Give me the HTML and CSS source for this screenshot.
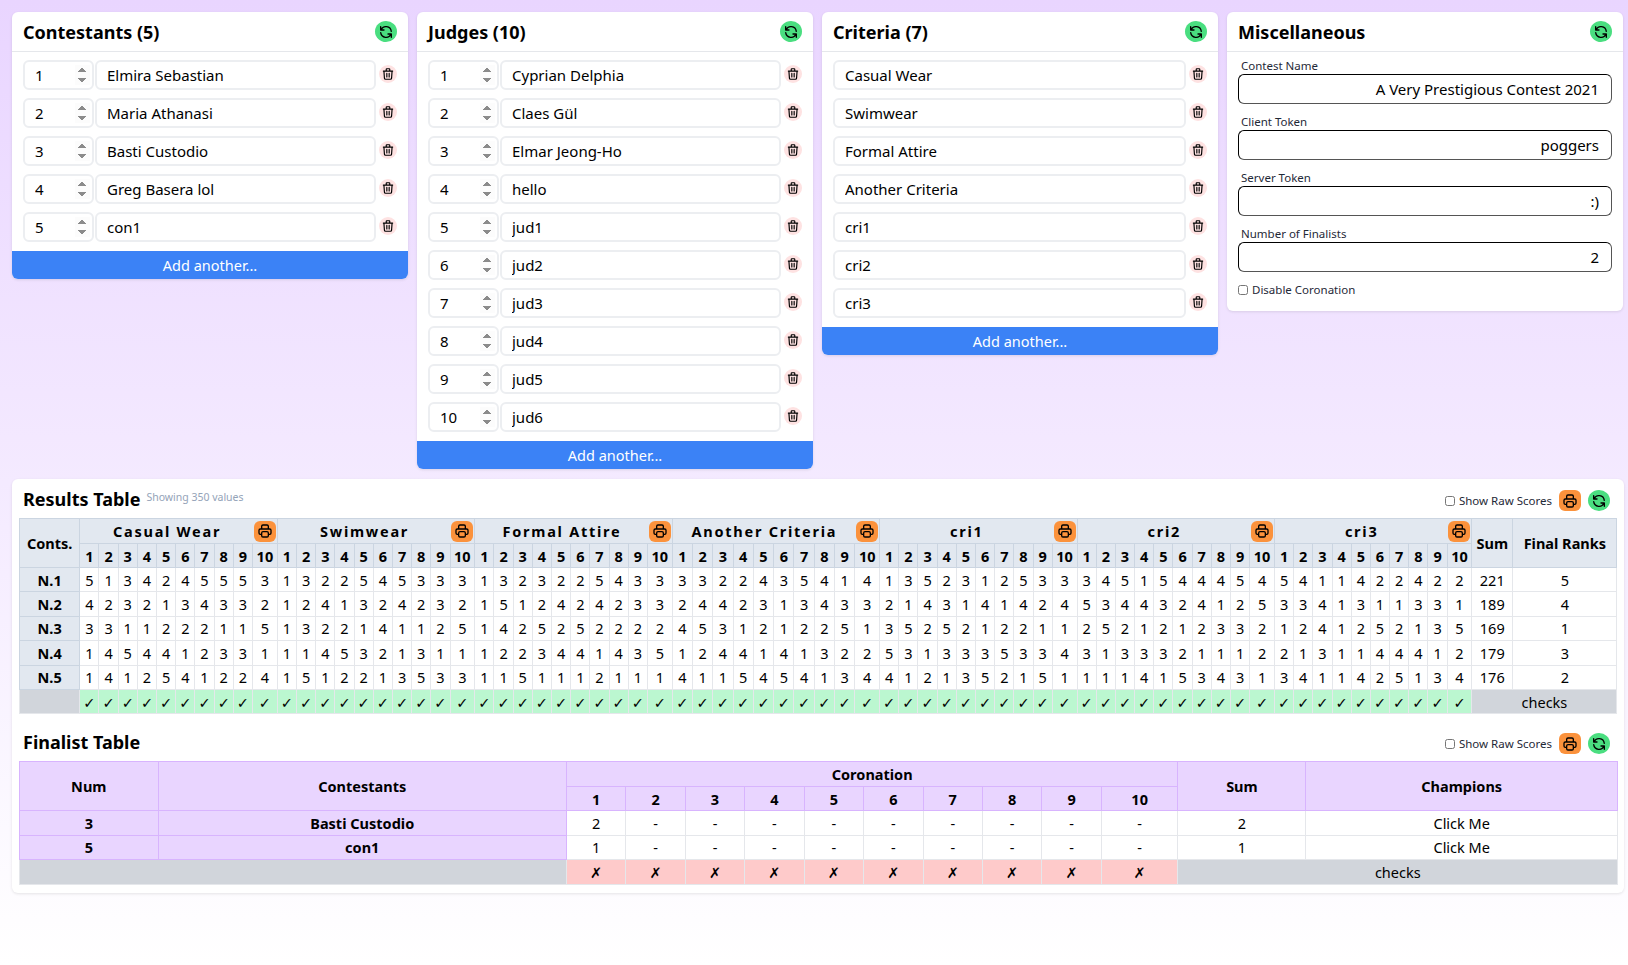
FILE: index.html
```html
<!DOCTYPE html>
<html>
  <head>
    <meta charset="UTF-8" />
    <title>Contest Admin</title>
    <link rel="stylesheet" href="styles.css">
  </head>
  <body>
    <svg class="sprite" xmlns="http://www.w3.org/2000/svg" aria-hidden="true">
      <symbol id="icon-refresh" viewBox="0 0 24 24"><path d="M4 4v5h.582m15.356 2A8.001 8.001 0 004.582 9m0 0H9m11 11v-5h-.581m0 0a8.003 8.003 0 01-15.357-2m15.357 2H15"></path></symbol>
      <symbol id="icon-trash" viewBox="0 0 24 24"><path d="M19 7l-.867 12.142A2 2 0 0116.138 21H7.862a2 2 0 01-1.995-1.858L5 7m5 4v6m4-6v6m1-10V4a1 1 0 00-1-1h-4a1 1 0 00-1 1v3M4 7h16"></path></symbol>
      <symbol id="icon-print" viewBox="0 0 24 24"><path d="M17 17h2a2 2 0 002-2v-4a2 2 0 00-2-2H5a2 2 0 00-2 2v4a2 2 0 002 2h2m2 4h6a2 2 0 002-2v-4a2 2 0 00-2-2H9a2 2 0 00-2 2v4a2 2 0 002 2zm8-12V5a2 2 0 00-2-2H9a2 2 0 00-2 2v4h10z"></path></symbol>
    </svg>

    <div class="panels">
      <!-- Contestants -->
      <section class="card">
        <header class="card-head">
          <h2>Contestants (5)</h2>
          <button class="btn-refresh"><svg class="icon"><use href="#icon-refresh"></use></svg></button>
        </header>
        <div class="rows">
          <div class="row"><input class="num-input" type="number" value="1"><input class="name-input" type="text" value="Elmira Sebastian"><button class="btn-trash"><svg class="icon"><use href="#icon-trash"></use></svg></button></div>
          <div class="row"><input class="num-input" type="number" value="2"><input class="name-input" type="text" value="Maria Athanasi"><button class="btn-trash"><svg class="icon"><use href="#icon-trash"></use></svg></button></div>
          <div class="row"><input class="num-input" type="number" value="3"><input class="name-input" type="text" value="Basti Custodio"><button class="btn-trash"><svg class="icon"><use href="#icon-trash"></use></svg></button></div>
          <div class="row"><input class="num-input" type="number" value="4"><input class="name-input" type="text" value="Greg Basera lol"><button class="btn-trash"><svg class="icon"><use href="#icon-trash"></use></svg></button></div>
          <div class="row"><input class="num-input" type="number" value="5"><input class="name-input" type="text" value="con1"><button class="btn-trash"><svg class="icon"><use href="#icon-trash"></use></svg></button></div>
        </div>
        <button class="btn-add">Add another...</button>
      </section>

      <!-- Judges -->
      <section class="card">
        <header class="card-head">
          <h2>Judges (10)</h2>
          <button class="btn-refresh"><svg class="icon"><use href="#icon-refresh"></use></svg></button>
        </header>
        <div class="rows">
          <div class="row"><input class="num-input" type="number" value="1"><input class="name-input" type="text" value="Cyprian Delphia"><button class="btn-trash"><svg class="icon"><use href="#icon-trash"></use></svg></button></div>
          <div class="row"><input class="num-input" type="number" value="2"><input class="name-input" type="text" value="Claes Gül"><button class="btn-trash"><svg class="icon"><use href="#icon-trash"></use></svg></button></div>
          <div class="row"><input class="num-input" type="number" value="3"><input class="name-input" type="text" value="Elmar Jeong-Ho"><button class="btn-trash"><svg class="icon"><use href="#icon-trash"></use></svg></button></div>
          <div class="row"><input class="num-input" type="number" value="4"><input class="name-input" type="text" value="hello"><button class="btn-trash"><svg class="icon"><use href="#icon-trash"></use></svg></button></div>
          <div class="row"><input class="num-input" type="number" value="5"><input class="name-input" type="text" value="jud1"><button class="btn-trash"><svg class="icon"><use href="#icon-trash"></use></svg></button></div>
          <div class="row"><input class="num-input" type="number" value="6"><input class="name-input" type="text" value="jud2"><button class="btn-trash"><svg class="icon"><use href="#icon-trash"></use></svg></button></div>
          <div class="row"><input class="num-input" type="number" value="7"><input class="name-input" type="text" value="jud3"><button class="btn-trash"><svg class="icon"><use href="#icon-trash"></use></svg></button></div>
          <div class="row"><input class="num-input" type="number" value="8"><input class="name-input" type="text" value="jud4"><button class="btn-trash"><svg class="icon"><use href="#icon-trash"></use></svg></button></div>
          <div class="row"><input class="num-input" type="number" value="9"><input class="name-input" type="text" value="jud5"><button class="btn-trash"><svg class="icon"><use href="#icon-trash"></use></svg></button></div>
          <div class="row"><input class="num-input" type="number" value="10"><input class="name-input" type="text" value="jud6"><button class="btn-trash"><svg class="icon"><use href="#icon-trash"></use></svg></button></div>
        </div>
        <button class="btn-add">Add another...</button>
      </section>

      <!-- Criteria -->
      <section class="card">
        <header class="card-head">
          <h2>Criteria (7)</h2>
          <button class="btn-refresh"><svg class="icon"><use href="#icon-refresh"></use></svg></button>
        </header>
        <div class="rows">
          <div class="row"><input class="name-input" type="text" value="Casual Wear"><button class="btn-trash"><svg class="icon"><use href="#icon-trash"></use></svg></button></div>
          <div class="row"><input class="name-input" type="text" value="Swimwear"><button class="btn-trash"><svg class="icon"><use href="#icon-trash"></use></svg></button></div>
          <div class="row"><input class="name-input" type="text" value="Formal Attire"><button class="btn-trash"><svg class="icon"><use href="#icon-trash"></use></svg></button></div>
          <div class="row"><input class="name-input" type="text" value="Another Criteria"><button class="btn-trash"><svg class="icon"><use href="#icon-trash"></use></svg></button></div>
          <div class="row"><input class="name-input" type="text" value="cri1"><button class="btn-trash"><svg class="icon"><use href="#icon-trash"></use></svg></button></div>
          <div class="row"><input class="name-input" type="text" value="cri2"><button class="btn-trash"><svg class="icon"><use href="#icon-trash"></use></svg></button></div>
          <div class="row"><input class="name-input" type="text" value="cri3"><button class="btn-trash"><svg class="icon"><use href="#icon-trash"></use></svg></button></div>
        </div>
        <button class="btn-add">Add another...</button>
      </section>

      <!-- Miscellaneous -->
      <section class="card">
        <header class="card-head">
          <h2>Miscellaneous</h2>
          <button class="btn-refresh"><svg class="icon"><use href="#icon-refresh"></use></svg></button>
        </header>
        <div class="misc">
          <label class="field"><span>Contest Name</span><input type="text" value="A Very Prestigious Contest 2021"></label>
          <label class="field"><span>Client Token</span><input type="text" value="poggers"></label>
          <label class="field"><span>Server Token</span><input type="text" value=":)"></label>
          <label class="field"><span>Number of Finalists</span><input type="text" value="2"></label>
          <label class="check"><input type="checkbox">Disable Coronation</label>
        </div>
      </section>
    </div>

    <section class="card results">
      <header class="table-head">
        <h2>Results Table</h2>
        <small>Showing 350 values</small>
        <div class="controls">
          <label class="check"><input type="checkbox">Show Raw Scores</label>
          <button class="btn-print"><svg class="icon"><use href="#icon-print"></use></svg></button>
          <button class="btn-refresh"><svg class="icon"><use href="#icon-refresh"></use></svg></button>
        </div>
      </header>

      <table class="score-table">
        <colgroup>
          <col class="c-first">
          <col class="c-n" span="9"><col class="c-ten">
          <col class="c-n" span="9"><col class="c-ten">
          <col class="c-n" span="9"><col class="c-ten">
          <col class="c-wide" span="9"><col class="c-ten">
          <col class="c-n" span="9"><col class="c-ten">
          <col class="c-n" span="9"><col class="c-ten">
          <col class="c-n" span="9"><col class="c-ten">
          <col class="c-sum"><col class="c-ranks">
        </colgroup>
        <thead>
          <tr class="group-row">
            <th rowspan="2">Conts.</th>
            <th colspan="10"><div class="group"><span>Casual Wear</span><button class="btn-print"><svg class="icon"><use href="#icon-print"></use></svg></button></div></th>
            <th colspan="10"><div class="group"><span>Swimwear</span><button class="btn-print"><svg class="icon"><use href="#icon-print"></use></svg></button></div></th>
            <th colspan="10"><div class="group"><span>Formal Attire</span><button class="btn-print"><svg class="icon"><use href="#icon-print"></use></svg></button></div></th>
            <th colspan="10"><div class="group"><span>Another Criteria</span><button class="btn-print"><svg class="icon"><use href="#icon-print"></use></svg></button></div></th>
            <th colspan="10"><div class="group"><span>cri1</span><button class="btn-print"><svg class="icon"><use href="#icon-print"></use></svg></button></div></th>
            <th colspan="10"><div class="group"><span>cri2</span><button class="btn-print"><svg class="icon"><use href="#icon-print"></use></svg></button></div></th>
            <th colspan="10"><div class="group"><span>cri3</span><button class="btn-print"><svg class="icon"><use href="#icon-print"></use></svg></button></div></th>
            <th rowspan="2">Sum</th>
            <th rowspan="2">Final Ranks</th>
          </tr>
          <tr class="num-row">
            <th>1</th><th>2</th><th>3</th><th>4</th><th>5</th><th>6</th><th>7</th><th>8</th><th>9</th><th>10</th>
            <th>1</th><th>2</th><th>3</th><th>4</th><th>5</th><th>6</th><th>7</th><th>8</th><th>9</th><th>10</th>
            <th>1</th><th>2</th><th>3</th><th>4</th><th>5</th><th>6</th><th>7</th><th>8</th><th>9</th><th>10</th>
            <th>1</th><th>2</th><th>3</th><th>4</th><th>5</th><th>6</th><th>7</th><th>8</th><th>9</th><th>10</th>
            <th>1</th><th>2</th><th>3</th><th>4</th><th>5</th><th>6</th><th>7</th><th>8</th><th>9</th><th>10</th>
            <th>1</th><th>2</th><th>3</th><th>4</th><th>5</th><th>6</th><th>7</th><th>8</th><th>9</th><th>10</th>
            <th>1</th><th>2</th><th>3</th><th>4</th><th>5</th><th>6</th><th>7</th><th>8</th><th>9</th><th>10</th>
          </tr>
        </thead>
        <tbody>
          <tr>
            <th>N.1</th>
            <td>5</td><td>1</td><td>3</td><td>4</td><td>2</td><td>4</td><td>5</td><td>5</td><td>5</td><td>3</td>
            <td>1</td><td>3</td><td>2</td><td>2</td><td>5</td><td>4</td><td>5</td><td>3</td><td>3</td><td>3</td>
            <td>1</td><td>3</td><td>2</td><td>3</td><td>2</td><td>2</td><td>5</td><td>4</td><td>3</td><td>3</td>
            <td>3</td><td>3</td><td>2</td><td>2</td><td>4</td><td>3</td><td>5</td><td>4</td><td>1</td><td>4</td>
            <td>1</td><td>3</td><td>5</td><td>2</td><td>3</td><td>1</td><td>2</td><td>5</td><td>3</td><td>3</td>
            <td>3</td><td>4</td><td>5</td><td>1</td><td>5</td><td>4</td><td>4</td><td>4</td><td>5</td><td>4</td>
            <td>5</td><td>4</td><td>1</td><td>1</td><td>4</td><td>2</td><td>2</td><td>4</td><td>2</td><td>2</td>
            <td>221</td><td>5</td>
          </tr>
          <tr>
            <th>N.2</th>
            <td>4</td><td>2</td><td>3</td><td>2</td><td>1</td><td>3</td><td>4</td><td>3</td><td>3</td><td>2</td>
            <td>1</td><td>2</td><td>4</td><td>1</td><td>3</td><td>2</td><td>4</td><td>2</td><td>3</td><td>2</td>
            <td>1</td><td>5</td><td>1</td><td>2</td><td>4</td><td>2</td><td>4</td><td>2</td><td>3</td><td>3</td>
            <td>2</td><td>4</td><td>4</td><td>2</td><td>3</td><td>1</td><td>3</td><td>4</td><td>3</td><td>3</td>
            <td>2</td><td>1</td><td>4</td><td>3</td><td>1</td><td>4</td><td>1</td><td>4</td><td>2</td><td>4</td>
            <td>5</td><td>3</td><td>4</td><td>4</td><td>3</td><td>2</td><td>4</td><td>1</td><td>2</td><td>5</td>
            <td>3</td><td>3</td><td>4</td><td>1</td><td>3</td><td>1</td><td>1</td><td>3</td><td>3</td><td>1</td>
            <td>189</td><td>4</td>
          </tr>
          <tr>
            <th>N.3</th>
            <td>3</td><td>3</td><td>1</td><td>1</td><td>2</td><td>2</td><td>2</td><td>1</td><td>1</td><td>5</td>
            <td>1</td><td>3</td><td>2</td><td>2</td><td>1</td><td>4</td><td>1</td><td>1</td><td>2</td><td>5</td>
            <td>1</td><td>4</td><td>2</td><td>5</td><td>2</td><td>5</td><td>2</td><td>2</td><td>2</td><td>2</td>
            <td>4</td><td>5</td><td>3</td><td>1</td><td>2</td><td>1</td><td>2</td><td>2</td><td>5</td><td>1</td>
            <td>3</td><td>5</td><td>2</td><td>5</td><td>2</td><td>1</td><td>2</td><td>2</td><td>1</td><td>1</td>
            <td>2</td><td>5</td><td>2</td><td>1</td><td>2</td><td>1</td><td>2</td><td>3</td><td>3</td><td>2</td>
            <td>1</td><td>2</td><td>4</td><td>1</td><td>2</td><td>5</td><td>2</td><td>1</td><td>3</td><td>5</td>
            <td>169</td><td>1</td>
          </tr>
          <tr>
            <th>N.4</th>
            <td>1</td><td>4</td><td>5</td><td>4</td><td>4</td><td>1</td><td>2</td><td>3</td><td>3</td><td>1</td>
            <td>1</td><td>1</td><td>4</td><td>5</td><td>3</td><td>2</td><td>1</td><td>3</td><td>1</td><td>1</td>
            <td>1</td><td>2</td><td>2</td><td>3</td><td>4</td><td>4</td><td>1</td><td>4</td><td>3</td><td>5</td>
            <td>1</td><td>2</td><td>4</td><td>4</td><td>1</td><td>4</td><td>1</td><td>3</td><td>2</td><td>2</td>
            <td>5</td><td>3</td><td>1</td><td>3</td><td>3</td><td>3</td><td>5</td><td>3</td><td>3</td><td>4</td>
            <td>3</td><td>1</td><td>3</td><td>3</td><td>3</td><td>2</td><td>1</td><td>1</td><td>1</td><td>2</td>
            <td>2</td><td>1</td><td>3</td><td>1</td><td>1</td><td>4</td><td>4</td><td>4</td><td>1</td><td>2</td>
            <td>179</td><td>3</td>
          </tr>
          <tr>
            <th>N.5</th>
            <td>1</td><td>4</td><td>1</td><td>2</td><td>5</td><td>4</td><td>1</td><td>2</td><td>2</td><td>4</td>
            <td>1</td><td>5</td><td>1</td><td>2</td><td>2</td><td>1</td><td>3</td><td>5</td><td>3</td><td>3</td>
            <td>1</td><td>1</td><td>5</td><td>1</td><td>1</td><td>1</td><td>2</td><td>1</td><td>1</td><td>1</td>
            <td>4</td><td>1</td><td>1</td><td>5</td><td>4</td><td>5</td><td>4</td><td>1</td><td>3</td><td>4</td>
            <td>4</td><td>1</td><td>2</td><td>1</td><td>3</td><td>5</td><td>2</td><td>1</td><td>5</td><td>1</td>
            <td>1</td><td>1</td><td>1</td><td>4</td><td>1</td><td>5</td><td>3</td><td>4</td><td>3</td><td>1</td>
            <td>3</td><td>4</td><td>1</td><td>1</td><td>4</td><td>2</td><td>5</td><td>1</td><td>3</td><td>4</td>
            <td>176</td><td>2</td>
          </tr>
          <tr class="check-row">
            <td class="gray"></td>
            <td>✓</td><td>✓</td><td>✓</td><td>✓</td><td>✓</td><td>✓</td><td>✓</td><td>✓</td><td>✓</td><td>✓</td>
            <td>✓</td><td>✓</td><td>✓</td><td>✓</td><td>✓</td><td>✓</td><td>✓</td><td>✓</td><td>✓</td><td>✓</td>
            <td>✓</td><td>✓</td><td>✓</td><td>✓</td><td>✓</td><td>✓</td><td>✓</td><td>✓</td><td>✓</td><td>✓</td>
            <td>✓</td><td>✓</td><td>✓</td><td>✓</td><td>✓</td><td>✓</td><td>✓</td><td>✓</td><td>✓</td><td>✓</td>
            <td>✓</td><td>✓</td><td>✓</td><td>✓</td><td>✓</td><td>✓</td><td>✓</td><td>✓</td><td>✓</td><td>✓</td>
            <td>✓</td><td>✓</td><td>✓</td><td>✓</td><td>✓</td><td>✓</td><td>✓</td><td>✓</td><td>✓</td><td>✓</td>
            <td>✓</td><td>✓</td><td>✓</td><td>✓</td><td>✓</td><td>✓</td><td>✓</td><td>✓</td><td>✓</td><td>✓</td>
            <td class="gray" colspan="2">checks</td>
          </tr>
        </tbody>
      </table>

      <header class="table-head finalist-head">
        <h2>Finalist Table</h2>
        <div class="controls">
          <label class="check"><input type="checkbox">Show Raw Scores</label>
          <button class="btn-print"><svg class="icon"><use href="#icon-print"></use></svg></button>
          <button class="btn-refresh"><svg class="icon"><use href="#icon-refresh"></use></svg></button>
        </div>
      </header>

      <table class="score-table finalist-table">
        <colgroup>
          <col class="f-num"><col class="f-name">
          <col class="f-n" span="9"><col class="f-ten">
          <col class="f-sum"><col class="f-champ">
        </colgroup>
        <thead>
          <tr class="group-row">
            <th rowspan="2">Num</th>
            <th rowspan="2">Contestants</th>
            <th colspan="10">Coronation</th>
            <th rowspan="2">Sum</th>
            <th rowspan="2">Champions</th>
          </tr>
          <tr class="num-row">
            <th>1</th><th>2</th><th>3</th><th>4</th><th>5</th><th>6</th><th>7</th><th>8</th><th>9</th><th>10</th>
          </tr>
        </thead>
        <tbody>
          <tr>
            <th>3</th><th>Basti Custodio</th>
            <td>2</td><td>-</td><td>-</td><td>-</td><td>-</td><td>-</td><td>-</td><td>-</td><td>-</td><td>-</td>
            <td>2</td><td>Click Me</td>
          </tr>
          <tr>
            <th>5</th><th>con1</th>
            <td>1</td><td>-</td><td>-</td><td>-</td><td>-</td><td>-</td><td>-</td><td>-</td><td>-</td><td>-</td>
            <td>1</td><td>Click Me</td>
          </tr>
          <tr class="cross-row">
            <td class="gray" colspan="2"></td>
            <td>✗</td><td>✗</td><td>✗</td><td>✗</td><td>✗</td><td>✗</td><td>✗</td><td>✗</td><td>✗</td><td>✗</td>
            <td class="gray" colspan="2">checks</td>
          </tr>
        </tbody>
      </table>
    </section>
  </body>
</html>
```

FILE: styles.css
```css
* {
  box-sizing: border-box;
}

body {
  margin: 0;
  height: 100vh;
  padding: 12px 4px 0 12px;
  overflow: hidden;
  font-family: "Noto Sans", "DejaVu Sans", sans-serif;
  font-size: 15px;
  color: #000;
  background: linear-gradient(to bottom, #e9d5ff, #ffffff);
}

.sprite {
  display: none;
}

button {
  padding: 0;
  border: none;
  font: inherit;
  cursor: pointer;
}

input {
  font: inherit;
  color: inherit;
}

.icon {
  display: block;
  fill: none;
  stroke: #000;
  stroke-width: 2;
  stroke-linecap: round;
  stroke-linejoin: round;
}

/* Top panels */
.panels {
  display: grid;
  grid-template-columns: repeat(4, 396px);
  column-gap: 9px;
  align-items: start;
  margin-bottom: 10px;
}

.card {
  background: #fff;
  border-radius: 6px;
  box-shadow: 0 1px 3px rgba(0, 0, 0, 0.1);
  overflow: hidden;
}

.card-head {
  display: flex;
  align-items: center;
  justify-content: space-between;
  height: 40px;
  padding: 0 11px;
  border-bottom: 1px solid #e5e7eb;
}

h2 {
  margin: 0;
  font-size: 18px;
  font-weight: 700;
}

.btn-refresh {
  display: flex;
  align-items: center;
  justify-content: center;
  width: 22px;
  height: 21px;
  border-radius: 50%;
  background: #4ade80;
}

.btn-refresh .icon {
  width: 16px;
  height: 16px;
}

.rows {
  display: flex;
  flex-direction: column;
  gap: 8px;
  padding: 8px 11px 9px;
}

.row {
  display: flex;
  align-items: center;
  height: 30px;
}

.num-input,
.name-input {
  height: 30px;
  border: 2px solid #eceef1;
  border-radius: 6px;
  outline: none;
  background: #fff;
}

.num-input {
  flex: none;
  width: 71px;
  margin-right: 1px;
  padding: 0 2px 0 10px;
}

.num-input::-webkit-inner-spin-button {
  opacity: 1;
}

.name-input {
  flex: 1;
  min-width: 0;
  padding: 0 10px;
}

.btn-trash {
  display: flex;
  flex: none;
  align-items: center;
  justify-content: center;
  width: 18px;
  height: 18px;
  margin-left: 3px;
  margin-top: -2px;
  border-radius: 50%;
  background: #fee2e2;
}

.btn-trash .icon {
  width: 14px;
  height: 14px;
}

.btn-add {
  display: block;
  width: 100%;
  height: 28px;
  background: #3b82f6;
  color: #fff;
  font-size: 14.5px;
}

/* Miscellaneous */
.misc {
  display: flex;
  flex-direction: column;
  padding: 6px 11px 13px;
}

.field {
  display: block;
  margin-bottom: 10px;
}

.field span {
  display: block;
  height: 16px;
  padding-left: 3px;
  font-size: 11.5px;
  line-height: 16px;
  color: #1f2937;
}

.field input {
  display: block;
  width: 100%;
  height: 30px;
  padding: 0 12px;
  text-align: right;
  border: 1px solid;
  border-color: #000 #555 #555 #000;
  border-radius: 6px;
  outline: none;
}

.check {
  display: flex;
  align-items: center;
  font-size: 11.5px;
  line-height: 16px;
  color: #1f2937;
}

.check input {
  width: 10px;
  height: 10px;
  margin: 0 4px 0 0;
}

/* Tables */
.results {
  padding: 0 7px 8px;
}

.table-head {
  display: flex;
  align-items: flex-start;
  height: 39px;
  padding: 8px 4px 0;
}

.table-head small {
  margin: 3px 0 0 6px;
  font-size: 10.5px;
  color: #94a3b8;
}

.controls {
  display: flex;
  align-items: center;
  gap: 7px;
  margin-left: auto;
  padding-top: 3px;
  padding-right: 3px;
}

.finalist-head {
  margin-top: 8px;
}

.btn-print {
  display: flex;
  flex: none;
  align-items: center;
  justify-content: center;
  width: 22px;
  height: 21px;
  border-radius: 6px;
  background: #fb923c;
}

.btn-print .icon {
  width: 16px;
  height: 16px;
}

.score-table {
  width: 100%;
  table-layout: fixed;
  border-collapse: collapse;
  font-size: 14.5px;
}

.score-table th,
.score-table td {
  padding: 0;
  text-align: center;
  height: 24.4px;
  border: 1px solid #e5e7eb;
  white-space: nowrap;
}

.score-table th {
  background: #e2e8f0;
  border-color: #cbd5e1;
  font-weight: 700;
}

.c-first { width: 60.3px; }
.c-n { width: 19.2px; }
.c-wide { width: 20.3px; }
.c-ten { width: 24.7px; }
.c-sum { width: 40.8px; }
.c-ranks { width: 104.3px; }

.group-row th {
  height: 25px;
}

.num-row th {
  height: 24px;
}

.group {
  display: flex;
  align-items: center;
  height: 23px;
  padding-right: 1px;
}

.group span {
  flex: 1;
  letter-spacing: 0.12em;
}

.check-row td {
  background: #bbf7d0;
  border-color: #e5e7eb;
}

.score-table td.gray {
  background: #d1d5db;
}

/* Finalist table colours */
.finalist-table th {
  background: #e9d5ff;
  border-color: #d8b4fe;
}

.cross-row td {
  background: #fecaca;
}

.f-num { width: 138.6px; }
.f-name { width: 408.3px; }
.f-n { width: 59.45px; }
.f-ten { width: 76.5px; }
.f-sum { width: 127.9px; }
.f-champ { width: 311.7px; }
```
